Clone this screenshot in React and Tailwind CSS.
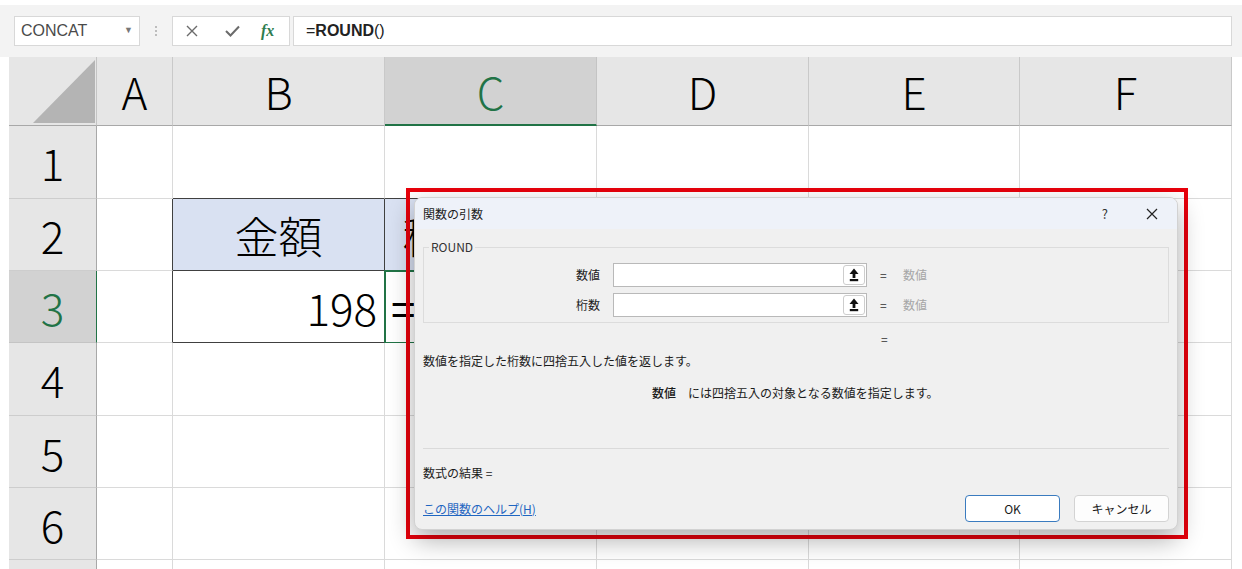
import React from 'react';

const FONT = "font-['Noto_Sans_CJK_JP','Noto_Sans',sans-serif]";

const cols = ['A', 'B', 'C', 'D', 'E', 'F'];
const rows = [1, 2, 3, 4, 5, 6, 7];

const UploadIcon = () => (
  <svg width="10" height="14" viewBox="0 0 10 14">
    <polygon points="5,0.5 9.5,6 0.5,6" fill="#111" />
    <rect x="3.6" y="5" width="2.8" height="5" fill="#111" />
    <rect x="0.8" y="11" width="8.4" height="2.2" fill="#111" />
  </svg>
);

const ArgRow = ({ label, className }) => (
  <div className={`flex items-center h-[24px] ${className || ''}`}>
    <div className="w-[176px] text-right">{label}</div>
    <div className="ml-[13px] w-[254px] h-[24px] bg-white border border-[#b9b9b9] flex items-center justify-end pr-[1px]">
      <div className="w-[22px] h-[20px] bg-white border border-[#cdcdcd] rounded-[3px] flex items-center justify-center">
        <UploadIcon />
      </div>
    </div>
    <div className="ml-[13px] w-[9px] text-[#333]">=</div>
    <div className="ml-[14px] text-[#a6a6a6]">数値</div>
  </div>
);

const cellClass = (r, c) => {
  // default grid line colours
  let right = 'border-r-[#dadada]';
  let bottom = 'border-b-[#dadada]';
  let bg = 'bg-white';
  if ((c === 'A' || c === 'B') && (r === 2 || r === 3)) right = 'border-r-[#404040]';
  if ((c === 'B' || c === 'C') && r === 1) bottom = 'border-b-[#404040]';
  if (c === 'B' && (r === 2 || r === 3)) bottom = 'border-b-[#404040]';
  if (c === 'C' && r === 2) bottom = 'border-b-[#404040]';
  if ((c === 'B' || c === 'C') && r === 2) bg = 'bg-[#d9e1f2]';
  return `border-r border-b ${right} ${bottom} ${bg}`;
};

const cellContent = (r, c) => {
  if (r === 2 && c === 'B') return <span className="w-full text-center">金額</span>;
  if (r === 2 && c === 'C') return <span className="w-full text-center whitespace-nowrap">税込金額</span>;
  if (r === 3 && c === 'B') return <span className="w-full text-right pr-[7px]">198</span>;
  if (r === 3 && c === 'C') return <span className="pl-[6px]">=</span>;
  return null;
};

export default function App() {
  return (
    <div className={`relative w-[1242px] h-[569px] overflow-hidden bg-white ${FONT}`}>
      {/* formula bar */}
      <div className="h-[5px] bg-white" />
      <div className="h-[52px] bg-[#f3f3f3] flex items-start pt-[11px] pl-[14px] pr-[10px]">
        <div className="w-[126px] h-[30px] bg-white border border-[#d8d8d8] flex items-center pl-[6px] text-[16px] text-[#4a4a4a] font-['Liberation_Sans',sans-serif]">
          CONCAT
          <span className="ml-auto mr-[6px] text-[9px] text-[#777]">▼</span>
        </div>
        <div className="w-[32px] h-[30px] flex flex-col items-center justify-center gap-[2px]">
          <span className="w-[2px] h-[2px] bg-[#bdbdbd]" />
          <span className="w-[2px] h-[2px] bg-[#bdbdbd]" />
          <span className="w-[2px] h-[2px] bg-[#bdbdbd]" />
        </div>
        <div className="w-[118px] h-[30px] bg-white border border-[#d8d8d8] flex items-center">
          <svg className="ml-[13px]" width="12" height="12" viewBox="0 0 12 12">
            <path d="M1 1 L11 11 M11 1 L1 11" stroke="#6b6b6b" strokeWidth="1.4" />
          </svg>
          <svg className="ml-[27px]" width="15" height="12" viewBox="0 0 15 12">
            <path d="M1 6 L5.5 10.5 L14 1.5" stroke="#6b6b6b" strokeWidth="2" fill="none" />
          </svg>
          <span className="ml-[21px] text-[16px] italic text-[#2e7d4f] font-['Liberation_Serif',serif] font-bold">fx</span>
        </div>
        <div className="ml-[3px] flex-1 h-[30px] bg-white border border-[#d8d8d8] flex items-center pl-[12px] text-[16px] text-[#222] font-['Liberation_Sans',sans-serif]">
          =<span className="font-bold">ROUND</span>()
        </div>
      </div>

      {/* sheet grid */}
      <div className="ml-[9px] w-[1223px] grid grid-cols-[88px_76px_212px_212px_212px_211px_212px] grid-rows-[69px_73px_72px_72px_73px_72px_72px_40px] text-[44px] leading-none text-black">
        <div className="relative bg-[#e6e6e6] border-r border-b border-r-[#c4c4c4] border-b-[#a8a8a8]">
          <svg className="absolute inset-0" width="88" height="69" viewBox="0 0 88 69">
            <polygon points="24,66 86,66 86,3" fill="#b4b4b4" />
          </svg>
        </div>
        {cols.map((c) =>
          c === 'C' ? (
            <div key={c} className="bg-[#d2d2d2] border-r border-r-[#c4c4c4] border-b-2 border-b-[#217346] flex items-center justify-center font-light text-[#217346]">
              {c}
            </div>
          ) : (
            <div key={c} className="bg-[#e6e6e6] border-r border-b border-r-[#c9c9c9] border-b-[#a8a8a8] flex items-center justify-center font-light">
              {c}
            </div>
          )
        )}
        {rows.map((r) => (
          <React.Fragment key={r}>
            {r === 3 ? (
              <div className="bg-[#d2d2d2] border-r border-b border-r-[#217346] border-b-[#c4c4c4] flex items-center justify-center font-light text-[#217346]">
                {r}
              </div>
            ) : (
              <div className="bg-[#e6e6e6] border-r border-b border-r-[#a8a8a8] border-b-[#cdcdcd] flex items-center justify-center font-light">
                {r < 7 ? r : null}
              </div>
            )}
            {cols.map((c) =>
              r === 3 && c === 'C' ? (
                <div key={c} className="bg-white outline-2 outline-[#217346] -outline-offset-1 flex items-center border-r border-b border-r-[#dadada] border-b-[#dadada]">
                  {cellContent(r, c)}
                </div>
              ) : (
                <div key={c} className={`flex items-center font-light ${cellClass(r, c)}`}>
                  {cellContent(r, c)}
                </div>
              )
            )}
          </React.Fragment>
        ))}
      </div>

      {/* red highlight frame */}
      <div className="absolute left-[406px] top-[188px] w-[782px] h-[351px] border-4 border-[#e8000b]" />

      {/* function arguments dialog */}
      <div className="absolute left-[414px] top-[197px] w-[764px] h-[333px] rounded-[8px] bg-[#f0f0f0] border border-[#d2d2d2] shadow-[0_10px_26px_rgba(0,0,0,0.32)] overflow-hidden flex flex-col text-[12px] leading-[16px] text-[#1a1a1a]">
        <div className="h-[31px] shrink-0 bg-[#eef2f9] flex items-center pl-[8px]">
          <span>関数の引数</span>
          <span className="ml-auto text-[13px] text-[#333]">?</span>
          <svg className="ml-[38px] mr-[19px]" width="12" height="12" viewBox="0 0 12 12">
            <path d="M1 1 L11 11 M11 1 L1 11" stroke="#222" strokeWidth="1.2" />
          </svg>
        </div>
        <div className="flex-1 flex flex-col px-[8px] pt-[10px]">
          <fieldset className="border border-[#dcdcdc] pb-[5px]">
            <legend className="ml-[5px] px-[2px] text-[#333]">ROUND</legend>
            <ArgRow label="数値" className="mt-[8px]" />
            <ArgRow label="桁数" className="mt-[6px]" />
          </fieldset>
          <div className="ml-[458px] mt-[8px] text-[#333]">=</div>
          <div className="mt-[6px]">数値を指定した桁数に四捨五入した値を返します。</div>
          <div className="mt-[16px] ml-[229px] flex">
            <span className="font-medium">数値</span>
            <span className="ml-[12px]">には四捨五入の対象となる数値を指定します。</span>
          </div>
          <div className="mt-[47px] border-t border-[#dadada]" />
          <div className="mt-[16px]">数式の結果 =</div>
          <div className="mt-[14px] flex items-center">
            <span className="text-[#1f66c1] underline">この関数のヘルプ(H)</span>
            <button className="ml-auto w-[95px] h-[27px] bg-white border border-[#3a7bbf] rounded-[4px] text-[12px]">OK</button>
            <button className="ml-[14px] w-[95px] h-[27px] bg-[#fdfdfd] border border-[#d3d3d3] rounded-[4px] text-[12px]">キャンセル</button>
          </div>
        </div>
      </div>
    </div>
  );
}
